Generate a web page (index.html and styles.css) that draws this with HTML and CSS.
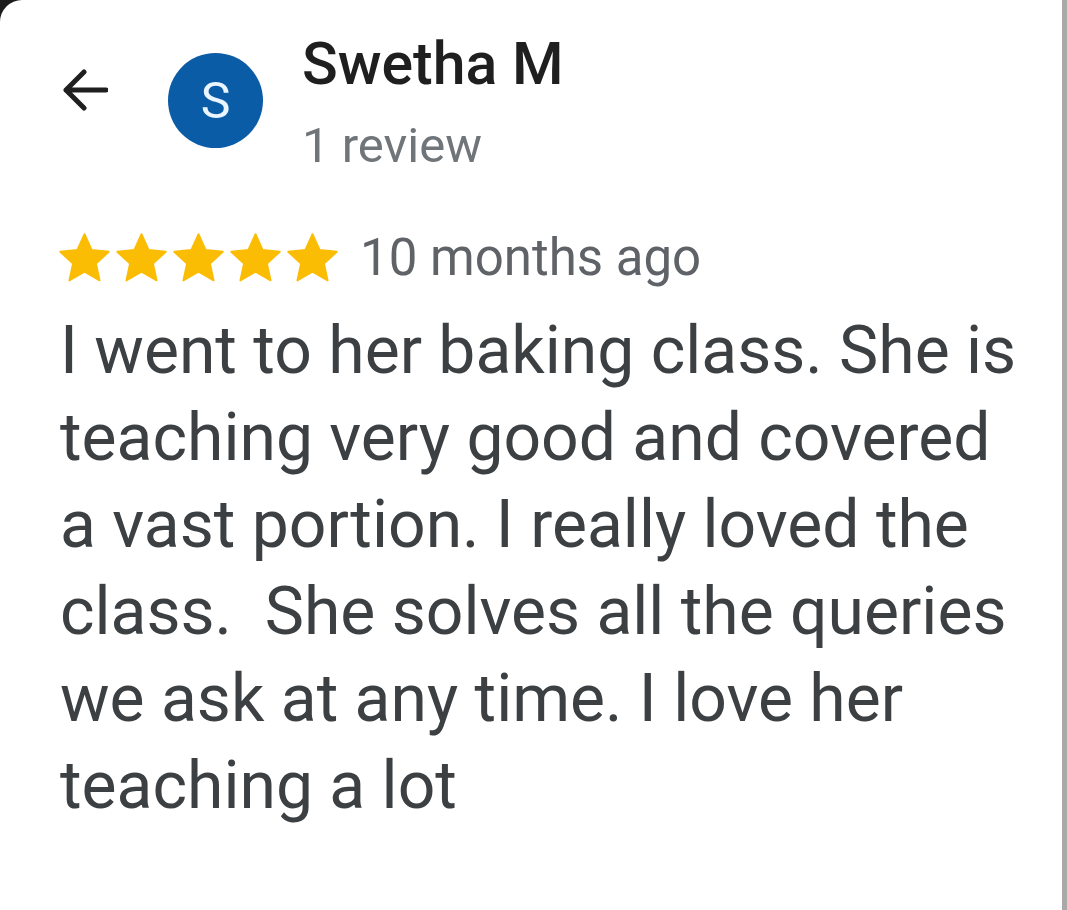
FILE: index.html
```html
<!DOCTYPE html>
<html lang="en">
<head>
    <meta charset="UTF-8">
    <meta name="viewport" content="width=device-width, initial-scale=1.0">
    <title>Review - Swetha M</title>
    <link rel="stylesheet" href="styles.css">
</head>
<body>
    <div class="sheet">
        <!-- reviewer header -->
        <div class="header">
            <div class="back">
                <svg viewBox="0 0 48 48" width="48" height="48">
                    <path d="M46 24H6M24 6L6 24l18 18" fill="none" stroke="#1f1f1f" stroke-width="5" stroke-linecap="round" stroke-linejoin="round"/>
                </svg>
            </div>
            <div class="avatar">S</div>
            <div class="who">
                <div class="name">Swetha M</div>
                <div class="count">1 review</div>
            </div>
        </div>

        <!-- rating + date -->
        <div class="meta">
            <div class="stars" id="stars"></div>
            <span class="when">10 months ago</span>
        </div>

        <p class="text">I went to her baking class. She is teaching very good and covered a vast portion. I really loved the class.&nbsp; She solves all the queries we ask at any time. I love her teaching a lot</p>
    </div>
    <div class="edge"></div>

    <script>
        // five filled stars
        const star = '<svg viewBox="0 0 24 24" width="55" height="55"><path d="M12 1.8l3.1 6.9 7.5.8-5.6 5.1 1.6 7.4L12 18.2 5.4 22l1.6-7.4L1.4 9.5l7.5-.8z" fill="#fbbc04" stroke="#fbbc04" stroke-width="0.8" stroke-linejoin="round"/></svg>';
        document.getElementById('stars').innerHTML = star.repeat(5);
    </script>
</body>
</html>
```

FILE: styles.css
```css
html {
    background: #1c1c1c;
}

body {
    margin: 0;
    height: 910px;
    display: flex;
    font-family: Roboto, "Noto Sans", Arial, sans-serif;
    overflow: hidden;
}

.sheet {
    flex: 1;
    background: #fff;
    border-top-left-radius: 22px;
    padding: 0 0 0 60px;
}

.edge {
    width: 5px;
    background: #a9a9a9;
}

.header {
    display: flex;
    align-items: flex-start;
    padding-top: 26px;
}

.back {
    width: 48px;
    height: 48px;
    margin-top: 40px;
    margin-right: 60px;
}

.back svg {
    display: block;
}

.avatar {
    width: 95px;
    height: 95px;
    margin-top: 27px;
    border-radius: 50%;
    background: #0b5ca6;
    color: #eaf5ff;
    font-size: 50px;
    display: flex;
    align-items: center;
    justify-content: center;
}

.who {
    margin-left: 39px;
}

.name {
    font-size: 59px;
    font-weight: 500;
    color: #1f1f1f;
    line-height: 76px;
}

.count {
    font-size: 49px;
    color: #70757a;
    line-height: 64px;
    margin-top: 12px;
}

.meta {
    display: flex;
    align-items: center;
    margin-top: 50px;
}

.stars {
    display: flex;
    gap: 2px;
    margin-left: -3px;
}

.stars svg {
    display: block;
}

.when {
    font-size: 51px;
    color: #5f6368;
    margin-left: 20px;
}

.text {
    margin: 20px 0 0;
    padding-right: 40px;
    font-size: 66px;
    line-height: 87px;
    color: #3c4043;
}
```
